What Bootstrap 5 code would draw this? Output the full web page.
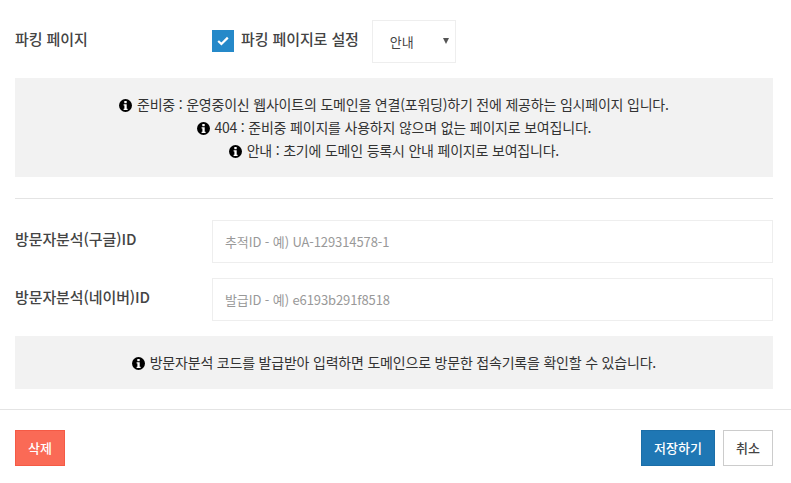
<!DOCTYPE html>
<html lang="ko">
<head>
<meta charset="utf-8">
<title>파킹 페이지</title>
<link rel="stylesheet" href="https://cdn.jsdelivr.net/npm/bootstrap@5.3.0/dist/css/bootstrap.min.css">
<style>
html,body{height:483px;overflow:hidden}
body{font-family:"Noto Sans CJK KR","Noto Sans",sans-serif;font-size:13px;color:#333;background:#fff}
.pane-body{padding:20px 18px 0 15px}
.field-row{display:flex;align-items:flex-start}
.field-label{width:197px;flex:none;font-size:15px;font-weight:500;color:#444;line-height:20px;letter-spacing:-.1px}
.top-row .field-label{padding-top:9px}
.top-row{height:43px}
.check-box{width:22px;height:22px;background:#2589c9;margin-top:10px;flex:none}
.check-text{font-size:15px;font-weight:500;color:#444;line-height:20px;margin:9px 13px 0 7px;letter-spacing:-.1px}
.select-wrap{position:relative;width:84px;height:43px}
.select-wrap::after{content:"";position:absolute;left:71px;top:18px;border-left:3px solid transparent;border-right:3px solid transparent;border-top:6px solid #555;pointer-events:none}
.fake-select{appearance:none;width:84px;height:43px;border:1px solid #eee;border-radius:0;background:#fff;color:#444;font:inherit;font-size:13px;padding:0 17px;outline:0}
.info-pane{background:#f2f2f2;text-align:center;color:#333;font-size:14px;line-height:23px;letter-spacing:-.2px}
.info-a{margin-top:15px;height:99px;padding-top:15px}
.info-b{margin-top:15px;height:53px;padding-top:15px}
.info-ico{width:13px;height:13px;vertical-align:-2px;margin-right:1px}
.sep{height:1px;background:#e4e4e4;margin:21px 0}
.id-row{height:43px;margin-bottom:15px}
.id-row .field-label{padding-top:9px}
.id-input{flex:1;height:43px;border:1px solid #eee;border-radius:0;padding:0 12px;font:inherit;font-size:13px;letter-spacing:-.1px;color:#444;outline:0;box-shadow:none}
.id-input::placeholder{color:#999;opacity:1}
.pane-foot{border-top:1px solid #e4e4e4;margin-top:20px;padding:20px 18px 0 15px;display:flex;justify-content:space-between}
.act-btn{height:36px;border-radius:0;font-size:13px;font-weight:500;padding:0;line-height:32px}
.act-del{width:50px;background:#fa6a56;border:1px solid #f55a45;color:#fff}
.act-save{width:74px;background:#1f77b4;border:1px solid #1b6ea8;color:#fff}
.act-cancel{width:50px;background:#fff;border:1px solid #ccc;color:#444}
</style>
</head>
<body>
<svg width="0" height="0" class="position-absolute"><defs>
<symbol id="i-info" viewBox="0 0 13 13"><circle cx="6.5" cy="6.5" r="6.5" fill="#000"/><rect x="5.3" y="2" width="2.4" height="2.2" fill="#fff"/><path d="M4.6 5.3h3.1v4.4h.9v1.3H4.6V9.7h.8V6.6h-.8z" fill="#fff"/></symbol>
</defs></svg>
<div class="pane-body">
  <div class="field-row top-row">
    <div class="field-label">파킹 페이지</div>
    <div class="check-box d-flex align-items-center justify-content-center">
      <svg width="12" height="10" viewBox="0 0 12 10"><path d="M1.2 5l3.2 3L10.8 1.6" fill="none" stroke="#fff" stroke-width="2.2"/></svg>
    </div>
    <div class="check-text">파킹 페이지로 설정</div>
    <div class="select-wrap"><select class="fake-select"><option>안내</option></select></div>
  </div>
  <div class="info-pane info-a">
    <div><svg class="info-ico"><use href="#i-info"/></svg> 준비중 : 운영중이신 웹사이트의 도메인을 연결(포워딩)하기 전에 제공하는 임시페이지 입니다.</div>
    <div><svg class="info-ico"><use href="#i-info"/></svg> 404 : 준비중 페이지를 사용하지 않으며 없는 페이지로 보여집니다.</div>
    <div><svg class="info-ico"><use href="#i-info"/></svg> 안내 : 초기에 도메인 등록시 안내 페이지로 보여집니다.</div>
  </div>
  <div class="sep"></div>
  <div class="field-row id-row">
    <div class="field-label">방문자분석(구글)ID</div>
    <input class="id-input form-control" type="text" placeholder="추적ID - 예) UA-129314578-1">
  </div>
  <div class="field-row id-row">
    <div class="field-label">방문자분석(네이버)ID</div>
    <input class="id-input form-control" type="text" placeholder="발급ID - 예) e6193b291f8518">
  </div>
  <div class="info-pane info-b">
    <div><svg class="info-ico"><use href="#i-info"/></svg> 방문자분석 코드를 발급받아 입력하면 도메인으로 방문한 접속기록을 확인할 수 있습니다.</div>
  </div>
</div>
<div class="pane-foot">
  <button type="button" class="btn act-btn act-del">삭제</button>
  <div class="d-flex gap-2">
    <button type="button" class="btn act-btn act-save">저장하기</button>
    <button type="button" class="btn act-btn act-cancel">취소</button>
  </div>
</div>
<script src="https://cdn.jsdelivr.net/npm/bootstrap@5.3.0/dist/js/bootstrap.bundle.min.js"></script>
</body>
</html>
